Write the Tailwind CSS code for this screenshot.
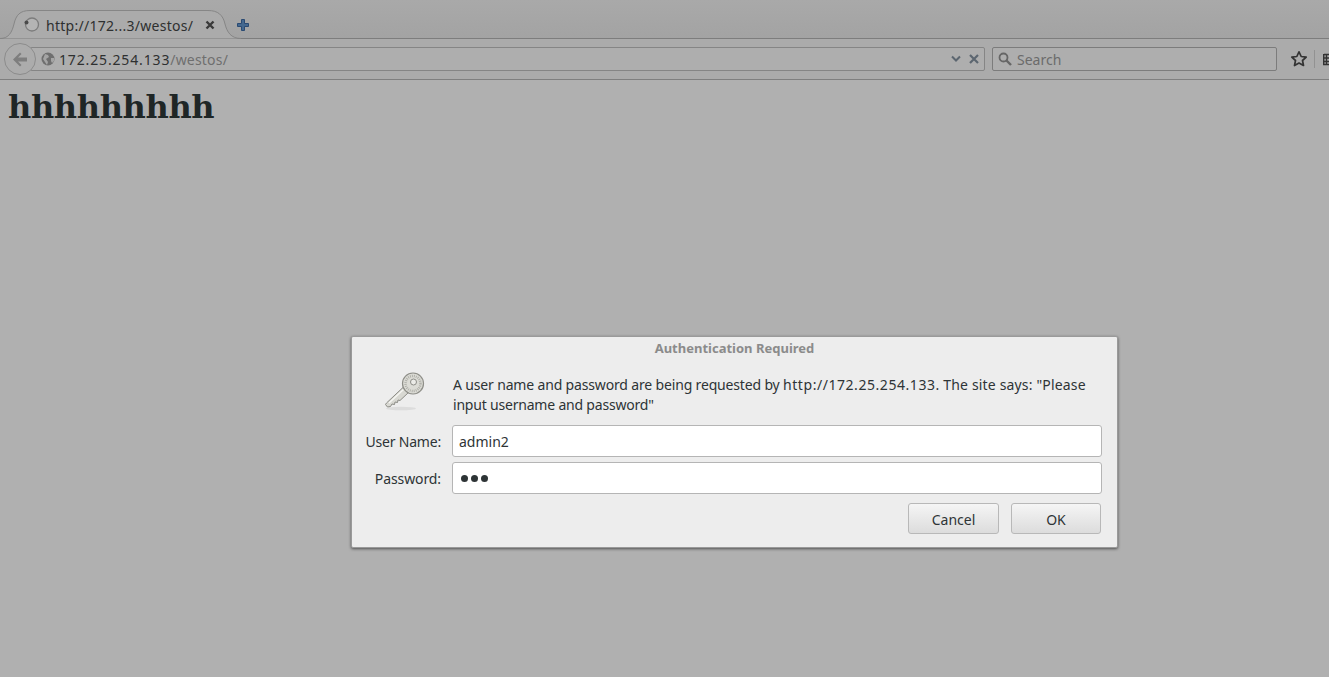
<!DOCTYPE html>
<html lang="en">
<head>
  <meta charset="UTF-8" />
  <title>http://172.25.254.133/westos/</title>
  <script src="https://cdn.jsdelivr.net/npm/@tailwindcss/browser@4"></script>
</head>
<body class="relative w-[1329px] h-[677px] overflow-hidden bg-[#b0b0b0] font-['Noto_Sans',sans-serif] text-[#2e3030]">

  <!-- Tab strip -->
  <div class="relative h-[39px] bg-gradient-to-b from-[#a9a9a9] to-[#a3a3a3] border-b border-[#7d7d7d]">
    <svg class="absolute left-0 top-0 w-[242px] h-[39px]" viewBox="0 0 242 39">
      <path d="M0 38.500C9 38.500 12 32 14 24 16 15 20 10.500 30 10.500H208C218 10.500 223 15 225 24 227 32 231 38.500 241 38.500" fill="#ababab" stroke="#868686" stroke-width="1"/>
    </svg>
    <div class="absolute left-[23px] top-[10px] h-[29px] flex items-center">
      <svg class="w-[17px] h-[17px] shrink-0" viewBox="0 0 17 17"><circle cx="9" cy="8.500" r="6.500" fill="#b4b4b4" stroke="#7c7c7c" stroke-width="1.300"/><circle cx="3.500" cy="6.500" r="2" fill="#4a4a4a"/></svg>
      <span class="ml-[6px] w-[161px] text-[14px] leading-[18px] tracking-[0.28px] whitespace-nowrap pt-[2px]">http://172...3/westos/</span>
      <svg class="w-[10px] h-[10px] shrink-0 ml-[-2px]" viewBox="0 0 10 10"><path d="M1.500 1.500l7 7M8.500 1.500l-7 7" stroke="#3a3a3a" stroke-width="2.400"/></svg>
    </div>
    <svg class="absolute left-[237px] top-[19px] w-[12px] h-[12px]" viewBox="0 0 12 12"><path d="M4.500 .5h3v4h4v3h-4v4h-3v-4h-4v-3h4z" fill="#44688f" stroke="#2a4a72" stroke-width="1"/></svg>
  </div>

  <!-- Nav bar -->
  <div class="relative h-[41px] bg-[#ababab] border-b border-[#7f7f7f]">
    <div class="absolute left-[30px] top-[8px] w-[955px] h-[24px] bg-[#aeaeae] border border-[#858585] rounded-[2px] flex items-center pl-[8px]">
      <svg class="w-[14px] h-[14px] shrink-0 ml-[2px]" viewBox="0 0 14 14"><circle cx="7" cy="7" r="6.500" fill="#6f6f6f"/><path d="M4 2l3 1 1 2-3 2 2 3-1 3-2-3-2-3zM10 6l3 0 0 3-2 2-1-2z" fill="#a5a5a5"/></svg>
      <span class="ml-[4px] pt-[2px] text-[14px] leading-[18px] tracking-[0.85px] whitespace-nowrap">172.25.254.133<span class="tracking-[0.2px] text-[#6f6f6f]">/westos/</span></span>
      <svg class="absolute left-[920px] top-[7px] w-[10px] h-[8px]" viewBox="0 0 10 8"><path d="M1 1.500l4 4 4-4" fill="none" stroke="#5c6670" stroke-width="2"/></svg>
      <svg class="absolute left-[938px] top-[6px] w-[10px] h-[10px]" viewBox="0 0 10 10"><path d="M1 1l8 8M9 1l-8 8" stroke="#5c6670" stroke-width="2.200"/></svg>
    </div>
    <div class="absolute left-[4px] top-[4px] w-[32px] h-[32px] rounded-full bg-[#acacac] border border-[#8c8c8c] flex items-center justify-center">
      <svg class="w-[16px] h-[15px]" viewBox="0 0 16 15"><path d="M8 .5L1 7.500l7 7 1.500-1.500-3.500-3.500h9v-4H6L9.500 2z" fill="#7e7e7e"/></svg>
    </div>
    <div class="absolute left-[992px] top-[8px] w-[285px] h-[24px] bg-[#aeaeae] border border-[#7c7c7c] rounded-[2px] flex items-center pl-[5px]">
      <svg class="w-[14px] h-[14px] shrink-0" viewBox="0 0 14 14"><circle cx="5.500" cy="5.500" r="4" fill="none" stroke="#666" stroke-width="1.800"/><path d="M8.500 8.500l4.500 4.500" stroke="#666" stroke-width="2.400"/></svg>
      <span class="ml-[5px] pt-[2px] text-[14px] leading-[18px] text-[#6b6b6b]">Search</span>
    </div>
    <svg class="absolute left-[1290px] top-[11px] w-[18px] h-[18px]" viewBox="0 0 18 18"><path d="M9 1.800l2.200 4.700 5 .6-3.700 3.400 1 5-4.500-2.500-4.500 2.500 1-5L1.800 7.100l5-.6z" fill="none" stroke="#333" stroke-width="1.700" stroke-linejoin="round"/></svg>
    <div class="absolute left-[1314px] top-[11px] w-px h-[18px] bg-[#929292]"></div>
    <svg class="absolute left-[1323px] top-[13px] w-[6px] h-[14px]" viewBox="0 0 6 14"><path d="M1 2.500h5M.7 2v10.500h5.300M1 6h5M1 9.500h5M3.500 2v10" fill="none" stroke="#333" stroke-width="1.500"/></svg>
  </div>

  <!-- Page -->
  <h1 class="pl-[8px] pt-[8px] font-['DejaVu_Serif',serif] font-bold text-[32px] leading-[38px] tracking-[-0.35px] text-[#1f2626]">hhhhhhhhh</h1>

  <!-- Auth dialog -->
  <div class="absolute left-[351px] top-[336px] w-[767px] h-[212px] bg-[#ededed] border border-[#9a9a9a] rounded-[2px] shadow-[0_1px_3px_rgba(0,0,0,0.55)]">
    <div class="h-[22px] text-center text-[13px] leading-[22px] font-bold text-[#8b8b8b]">Authentication Required</div>
    <div class="flex pl-[33px] pt-[12px] h-[66px]">
      <svg class="w-[40px] h-[40px] shrink-0 mt-[1px]" viewBox="0 0 40 40">
        <ellipse cx="16" cy="36.500" rx="15" ry="1.800" fill="#dcdcdc"/>
        <path d="M1.500 31L19 14.500l5 5.500-9 8.500-2-.5-.5 2.500-2.500-.5-.5 2.500-2.500-.5-1.500 2.500-3 .5-2-2.500z" fill="#d8d8d2" stroke="#8b8b85" stroke-width="1"/>
        <path d="M4 31L19 17" stroke="#f5f5f2" stroke-width="1.500"/>
        <circle cx="28" cy="11.500" r="10.500" fill="#dcdcd6" stroke="#8e8e88" stroke-width="1.200"/>
        <circle cx="28" cy="11.500" r="7.500" fill="none" stroke="#b0b0aa" stroke-width="2.500" stroke-dasharray="1 1"/>
        <circle cx="28.500" cy="10" r="3" fill="#ecece8" stroke="#8e8e88" stroke-width="1"/>
      </svg>
      <p class="ml-[28px] w-[650px] pt-[3.500px] text-[14px] leading-[20px] tracking-[-0.16px] text-[#2e3436]">A user name and password are being requested by <span class="tracking-[0.55px]">http://172.25.254.133</span><span class="tracking-[0.17px]">. The site says: "Please</span> <span class="tracking-[-0.2px]">input username and password"</span></p>
    </div>
    <div class="flex items-center h-[32px]">
      <label class="w-[89px] text-right text-[14px] tracking-[-0.2px] text-[#2e3436]">User Name:</label>
      <div class="ml-[11px] w-[650px] h-[32px] bg-white border border-[#b5b5b5] rounded-[3px] pl-[6px] text-[14px] leading-[31px] text-[#2e3436]">admin2</div>
    </div>
    <div class="flex items-center h-[32px] mt-[5px]">
      <label class="w-[89px] text-right text-[14px] tracking-[-0.1px] text-[#2e3436]">Password:</label>
      <div class="ml-[11px] w-[650px] h-[32px] bg-white border border-[#b5b5b5] rounded-[3px] pl-[8px] flex items-center gap-[3px]">
        <span class="w-[7px] h-[7px] rounded-full bg-[#2e3436]"></span>
        <span class="w-[7px] h-[7px] rounded-full bg-[#2e3436]"></span>
        <span class="w-[7px] h-[7px] rounded-full bg-[#2e3436]"></span>
      </div>
    </div>
    <div class="flex justify-end gap-[12px] pr-[16px] mt-[9px]">
      <button class="w-[91px] h-[31px] pt-[1px] rounded-[3px] border border-[#b8b8b8] bg-gradient-to-b from-[#f5f5f5] to-[#dcdcdc] text-[14px] text-[#2e3436]">Cancel</button>
      <button class="w-[90px] h-[31px] pt-[1px] rounded-[3px] border border-[#b8b8b8] bg-gradient-to-b from-[#f5f5f5] to-[#dcdcdc] text-[14px] text-[#2e3436]">OK</button>
    </div>
  </div>
</body>
</html>
